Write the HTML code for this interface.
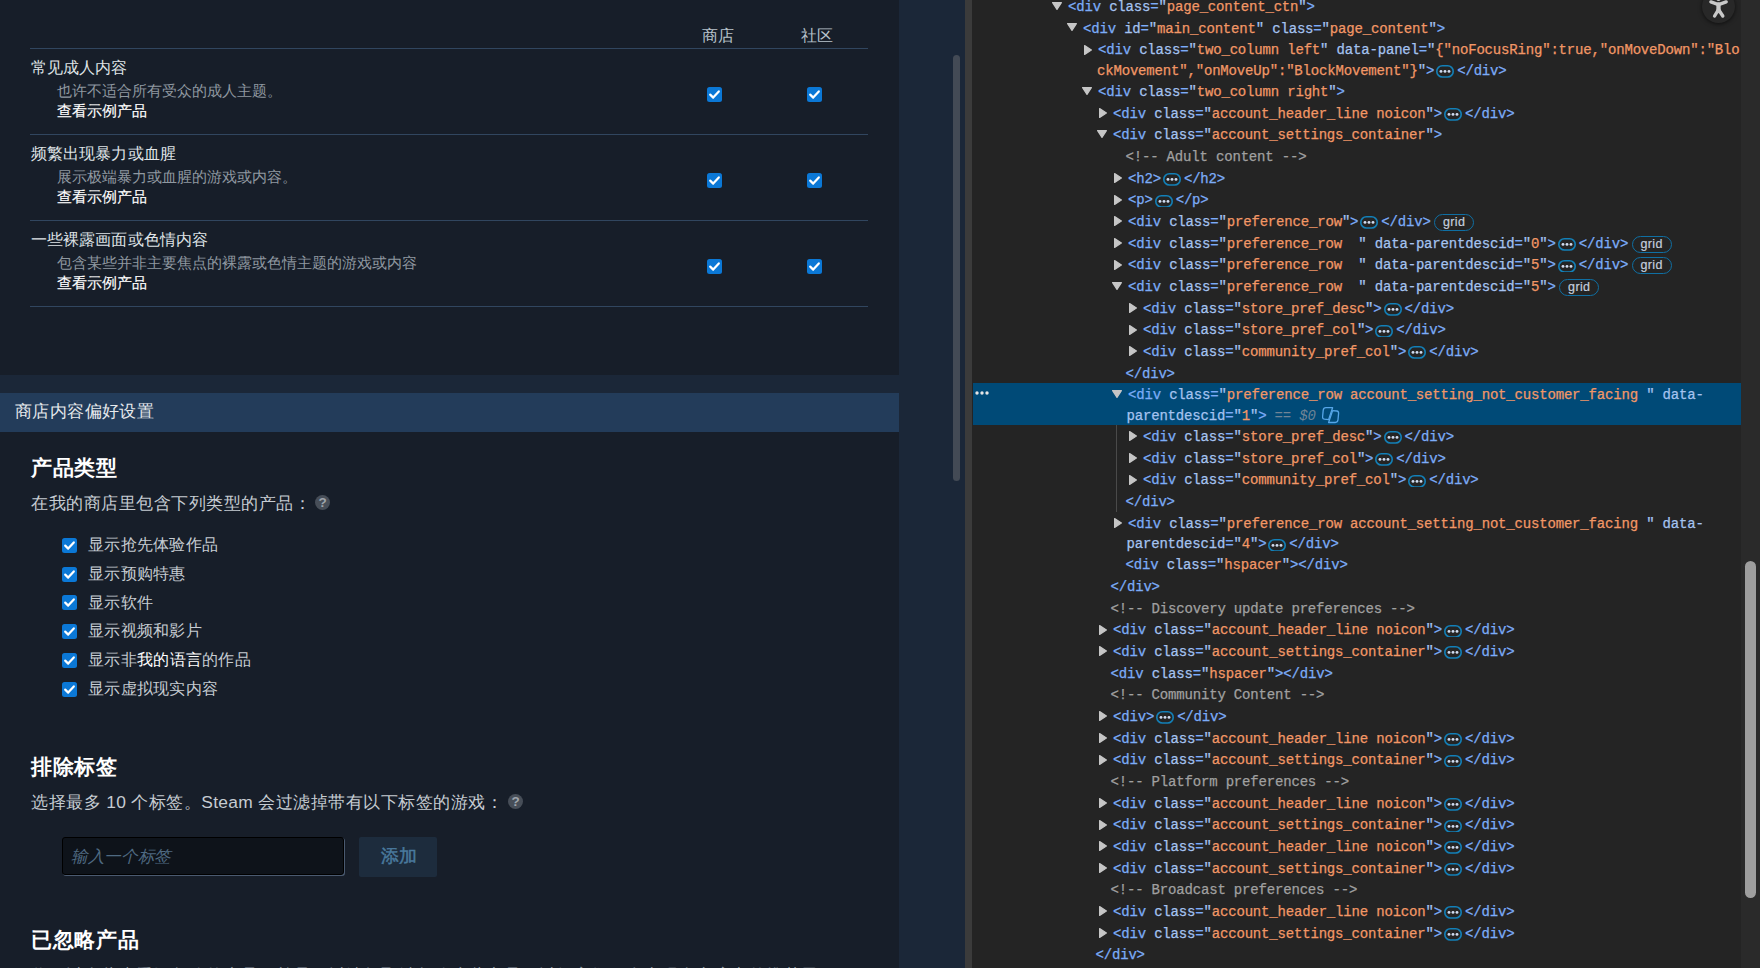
<!DOCTYPE html>
<html><head><meta charset="utf-8"><style>
*{margin:0;padding:0;box-sizing:border-box}
html,body{width:1760px;height:968px;overflow:hidden;background:#242424;font-family:"Liberation Sans",sans-serif}
#left{position:absolute;left:0;top:0;width:965px;height:968px;background:#1b2738;overflow:hidden}
.box{position:absolute;left:0;width:899px;background:#171e29}
.abs{position:absolute;white-space:nowrap}
.hdr{position:absolute;left:0;top:393px;width:899px;height:39px;background:#233c5a}
.rule{position:absolute;left:30px;width:838px;height:1px;background:#31465f}
.cb{position:absolute;width:15px;height:15px;border-radius:2.5px;background:#0b78d6}
.cb svg{position:absolute;left:0;top:0}
.col{color:#b8c3cc;font-size:16px}
.ttl{color:#dfe3e6;font-size:16px;letter-spacing:0.1px}
.dsc{color:#8f98a0;font-size:15px}
.lnk{color:#ffffff;font-size:15px;-webkit-text-stroke:0.15px #fff}
.h2{color:#ffffff;font-size:21px;font-weight:bold;letter-spacing:0.67px}
.txt{color:#c6ccd2;font-size:17.4px;letter-spacing:0.5px}
.lbl{color:#c6ccd2;font-size:16px;letter-spacing:0.3px}
.help{position:absolute;width:15px;height:15px;border-radius:50%;background:#474e58;color:#9ea5ac;font-size:13.5px;font-weight:bold;text-align:center;line-height:16.5px}
.inp{position:absolute;left:62px;top:837px;width:282px;height:38px;background:#0e131a;border:1px solid #000;border-radius:3px;box-shadow:1px 1px 0 #4a5a70}
.btn{position:absolute;left:359px;top:837px;width:78px;height:40px;background:#1d2c3d;border-radius:2px}
.thumbL{position:absolute;left:953px;top:55px;width:7px;height:426px;border-radius:4px;background:#434a55}
#divider{position:absolute;left:965px;top:0;width:7px;height:968px;background:#3b3b3b}
#dev{position:absolute;left:972px;top:0;width:788px;height:968px;background:#242424;overflow:hidden}
#dev .ln,#dev .tri,#dev .selbar,#dev .guide,#dev .dots3,#dev .a11y,#dev .vtrack,#dev .vthumb{position:absolute}
#dev .ln{margin-left:-972px;font-family:"Liberation Mono",monospace;font-size:14px;letter-spacing:-0.178px;line-height:21.56px;height:21.56px;white-space:pre;color:#a5c3f0;-webkit-text-stroke-width:0.25px}
.tg{color:#7cacf8}.at{color:#a5c3f0}.vl{color:#f29766}.cm{color:#a0a0a0}
.ell{display:inline-block;vertical-align:-3px;margin:0 3px 0 2px}
.grid{display:inline-block;position:relative;width:40px;height:17px;border:1.5px solid #0f6fa3;border-radius:9px;margin-left:3.5px;vertical-align:0px;font-family:"Liberation Sans",sans-serif;font-size:12.5px;letter-spacing:0.4px;line-height:14px;text-align:center;color:#c4cede;-webkit-text-stroke:0.2px #c4cede}
#dev .tri{margin-left:-972px}
.tr{border-left:8px solid #bdbdbd;border-top:5px solid transparent;border-bottom:5px solid transparent}
.td{border-top:8px solid #bdbdbd;border-left:5px solid transparent;border-right:5px solid transparent}
#dev .selbar{left:1px;width:768px;background:#004a77}
#dev .guide{left:144px;width:1px;background:#4a4a4a}
.eq{color:#6f8496;-webkit-text-stroke-width:0}.eq i{font-style:italic}
.ai{display:inline-block;vertical-align:-4px;margin-left:6px}
#dev .vtrack{left:769px;top:0;width:19px;height:968px;background:#2a2a2a}
#dev .vthumb{left:773px;top:561px;width:11px;height:337px;border-radius:6px;background:#9e9e9e}
#dev .a11y{left:730px;top:-10px;width:33px;height:33px;border-radius:50%;background:#282828;box-shadow:0 1px 4px rgba(0,0,0,0.6)}
#dev .a11y svg{position:absolute;left:0;top:0}

</style></head><body>
<div id="left">
<div class="box" style="top:0;height:375px"></div>
<div class="box" style="top:432px;height:536px"></div>
<div class="abs col" style="left:702px;top:26px">商店</div>
<div class="abs col" style="left:801px;top:26px">社区</div>
<div class="rule" style="top:48px"></div>
<div class="rule" style="top:134px"></div>
<div class="rule" style="top:220px"></div>
<div class="rule" style="top:306px"></div>

<div class="abs ttl" style="left:31px;top:58px">常见成人内容</div>
<div class="abs dsc" style="left:57px;top:82px">也许不适合所有受众的成人主题。</div>
<div class="abs lnk" style="left:57px;top:102px">查看示例产品</div>
<div class="abs ttl" style="left:31px;top:144px">频繁出现暴力或血腥</div>
<div class="abs dsc" style="left:57px;top:168px">展示极端暴力或血腥的游戏或内容。</div>
<div class="abs lnk" style="left:57px;top:188px">查看示例产品</div>
<div class="abs ttl" style="left:31px;top:230px">一些裸露画面或色情内容</div>
<div class="abs dsc" style="left:57px;top:254px">包含某些并非主要焦点的裸露或色情主题的游戏或内容</div>
<div class="abs lnk" style="left:57px;top:274px">查看示例产品</div>

<div class="cb" style="left:707px;top:87px"><svg width="15" height="15" viewBox="0 0 15 15"><path d="M3.2 7.6 L6.2 10.6 L11.8 4.4" fill="none" stroke="#fff" stroke-width="2.2" stroke-linecap="round" stroke-linejoin="round"/></svg></div>
<div class="cb" style="left:807px;top:87px"><svg width="15" height="15" viewBox="0 0 15 15"><path d="M3.2 7.6 L6.2 10.6 L11.8 4.4" fill="none" stroke="#fff" stroke-width="2.2" stroke-linecap="round" stroke-linejoin="round"/></svg></div>
<div class="cb" style="left:707px;top:173px"><svg width="15" height="15" viewBox="0 0 15 15"><path d="M3.2 7.6 L6.2 10.6 L11.8 4.4" fill="none" stroke="#fff" stroke-width="2.2" stroke-linecap="round" stroke-linejoin="round"/></svg></div>
<div class="cb" style="left:807px;top:173px"><svg width="15" height="15" viewBox="0 0 15 15"><path d="M3.2 7.6 L6.2 10.6 L11.8 4.4" fill="none" stroke="#fff" stroke-width="2.2" stroke-linecap="round" stroke-linejoin="round"/></svg></div>
<div class="cb" style="left:707px;top:259px"><svg width="15" height="15" viewBox="0 0 15 15"><path d="M3.2 7.6 L6.2 10.6 L11.8 4.4" fill="none" stroke="#fff" stroke-width="2.2" stroke-linecap="round" stroke-linejoin="round"/></svg></div>
<div class="cb" style="left:807px;top:259px"><svg width="15" height="15" viewBox="0 0 15 15"><path d="M3.2 7.6 L6.2 10.6 L11.8 4.4" fill="none" stroke="#fff" stroke-width="2.2" stroke-linecap="round" stroke-linejoin="round"/></svg></div>

<div class="hdr"></div>
<div class="abs txt" style="left:15px;top:399px;color:#e6e9ec;letter-spacing:0.4px">商店内容偏好设置</div>
<div class="abs h2" style="left:31px;top:454px">产品类型</div>
<div class="abs txt" style="left:31px;top:491px">在我的商店里包含下列类型的产品：</div>
<div class="help" style="left:315px;top:495px">?</div>

<div class="cb" style="left:62px;top:538px"><svg width="15" height="15" viewBox="0 0 15 15"><path d="M3.2 7.6 L6.2 10.6 L11.8 4.4" fill="none" stroke="#fff" stroke-width="2.2" stroke-linecap="round" stroke-linejoin="round"/></svg></div>
<div class="cb" style="left:62px;top:567px"><svg width="15" height="15" viewBox="0 0 15 15"><path d="M3.2 7.6 L6.2 10.6 L11.8 4.4" fill="none" stroke="#fff" stroke-width="2.2" stroke-linecap="round" stroke-linejoin="round"/></svg></div>
<div class="cb" style="left:62px;top:595px"><svg width="15" height="15" viewBox="0 0 15 15"><path d="M3.2 7.6 L6.2 10.6 L11.8 4.4" fill="none" stroke="#fff" stroke-width="2.2" stroke-linecap="round" stroke-linejoin="round"/></svg></div>
<div class="cb" style="left:62px;top:624px"><svg width="15" height="15" viewBox="0 0 15 15"><path d="M3.2 7.6 L6.2 10.6 L11.8 4.4" fill="none" stroke="#fff" stroke-width="2.2" stroke-linecap="round" stroke-linejoin="round"/></svg></div>
<div class="cb" style="left:62px;top:653px"><svg width="15" height="15" viewBox="0 0 15 15"><path d="M3.2 7.6 L6.2 10.6 L11.8 4.4" fill="none" stroke="#fff" stroke-width="2.2" stroke-linecap="round" stroke-linejoin="round"/></svg></div>
<div class="cb" style="left:62px;top:682px"><svg width="15" height="15" viewBox="0 0 15 15"><path d="M3.2 7.6 L6.2 10.6 L11.8 4.4" fill="none" stroke="#fff" stroke-width="2.2" stroke-linecap="round" stroke-linejoin="round"/></svg></div>

<div class="abs lbl" style="left:88px;top:534.5px">显示抢先体验作品</div>
<div class="abs lbl" style="left:88px;top:563.5px">显示预购特惠</div>
<div class="abs lbl" style="left:88px;top:592.5px">显示软件</div>
<div class="abs lbl" style="left:88px;top:620.5px">显示视频和影片</div>
<div class="abs lbl" style="left:88px;top:649.5px">显示非<span style="color:#fff">我的语言</span>的作品</div>
<div class="abs lbl" style="left:88px;top:678.5px">显示虚拟现实内容</div>

<div class="abs h2" style="left:31px;top:753px">排除标签</div>
<div class="abs txt" style="left:31px;top:790px">选择最多<span style="letter-spacing:0.33px"> 10 </span>个标签。<span style="letter-spacing:0.3px">Steam </span>会过滤掉带有以下标签的游戏：</div>
<div class="help" style="left:508px;top:794px">?</div>
<div class="inp"></div>
<div class="abs" style="left:71px;top:846px;font-size:16.5px;letter-spacing:-0.33px;font-style:italic;color:#4f6a82">输入一个标签</div>
<div class="btn"></div>
<div class="abs" style="left:380.5px;top:844px;font-size:18px;letter-spacing:0.3px;color:#4a7a9e;-webkit-text-stroke:0.45px #4a7a9e">添加</div>
<div class="abs h2" style="left:31px;top:926px">已忽略产品</div>
<div class="abs txt" style="left:31px;top:963px;color:#8f98a0">你可以在此查看已忽略的产品，并且可以选择取消忽略这些产品，以便它们再次出现在商店中的推荐里。</div>
<div class="thumbL"></div>
</div>
<div id="divider"></div>

<div id="dev">
<div class="selbar" style="top:382.91px;height:42.12px"></div>
<div class="guide" style="top:425.03px;height:86.64px"></div>
<svg class="dots3" width="20" height="8" viewBox="0 0 20 8" style="left:0px;top:389.41px"><g fill="#e6e6e6"><circle cx="5" cy="4" r="1.7"/><circle cx="10" cy="4" r="1.7"/><circle cx="15" cy="4" r="1.7"/></g></svg>
<svg class="tri" width="12" height="10" viewBox="0 0 12 10" style="left:1050.80px;top:0.79px"><path d="M1.6 1.6 L10.4 1.6 L6 8.4 Z" fill="#c6c6c6" stroke="#c6c6c6" stroke-width="1.2" stroke-linejoin="round"/></svg>
<div class="ln" style="left:1068px;top:-2.96px"><span class="tg">&lt;div</span> <span class="at">class</span><span class="tg">=</span><span class="at">"</span><span class="vl">page_content_ctn</span><span class="at">"</span><span class="tg">&gt;</span></div>
<svg class="tri" width="12" height="10" viewBox="0 0 12 10" style="left:1065.80px;top:22.45px"><path d="M1.6 1.6 L10.4 1.6 L6 8.4 Z" fill="#c6c6c6" stroke="#c6c6c6" stroke-width="1.2" stroke-linejoin="round"/></svg>
<div class="ln" style="left:1083px;top:18.70px"><span class="tg">&lt;div</span> <span class="at">id</span><span class="tg">=</span><span class="at">"</span><span class="vl">main_content</span><span class="at">"</span> <span class="at">class</span><span class="tg">=</span><span class="at">"</span><span class="vl">page_content</span><span class="at">"</span><span class="tg">&gt;</span></div>
<svg class="tri" width="10" height="12" viewBox="0 0 10 12" style="left:1082.70px;top:43.70px"><path d="M1.6 1.6 L8.4 6 L1.6 10.4 Z" fill="#c6c6c6" stroke="#c6c6c6" stroke-width="1.2" stroke-linejoin="round"/></svg>
<div class="ln" style="left:1098px;top:40.36px"><span class="tg">&lt;div</span> <span class="at">class</span><span class="tg">=</span><span class="at">"</span><span class="vl">two_column left</span><span class="at">"</span> <span class="at">data-panel</span><span class="tg">=</span><span class="at">"</span><span class="vl">{"noFocusRing":true,"onMoveDown":"Blo</span></div>
<div class="ln" style="left:1097px;top:60.98px"><span class="vl">ckMovement","onMoveUp":"BlockMovement"}</span><span class="at">"</span><span class="tg">&gt;</span><svg class="ell" width="18" height="12.8" viewBox="0 0 18 12.8"><rect x="0.8" y="0.8" width="16.4" height="11.2" rx="5.6" fill="none" stroke="#1380b8" stroke-width="1.6"/><g fill="#d0dcf0"><circle cx="5" cy="6.4" r="1.45"/><circle cx="9" cy="6.4" r="1.45"/><circle cx="13" cy="6.4" r="1.45"/></g></svg><span class="tg">&lt;/div&gt;</span></div>
<svg class="tri" width="12" height="10" viewBox="0 0 12 10" style="left:1080.80px;top:85.83px"><path d="M1.6 1.6 L10.4 1.6 L6 8.4 Z" fill="#c6c6c6" stroke="#c6c6c6" stroke-width="1.2" stroke-linejoin="round"/></svg>
<div class="ln" style="left:1098px;top:82.08px"><span class="tg">&lt;div</span> <span class="at">class</span><span class="tg">=</span><span class="at">"</span><span class="vl">two_column right</span><span class="at">"</span><span class="tg">&gt;</span></div>
<svg class="tri" width="10" height="12" viewBox="0 0 10 12" style="left:1097.70px;top:107.08px"><path d="M1.6 1.6 L8.4 6 L1.6 10.4 Z" fill="#c6c6c6" stroke="#c6c6c6" stroke-width="1.2" stroke-linejoin="round"/></svg>
<div class="ln" style="left:1113px;top:103.73px"><span class="tg">&lt;div</span> <span class="at">class</span><span class="tg">=</span><span class="at">"</span><span class="vl">account_header_line noicon</span><span class="at">"</span><span class="tg">&gt;</span><svg class="ell" width="18" height="12.8" viewBox="0 0 18 12.8"><rect x="0.8" y="0.8" width="16.4" height="11.2" rx="5.6" fill="none" stroke="#1380b8" stroke-width="1.6"/><g fill="#d0dcf0"><circle cx="5" cy="6.4" r="1.45"/><circle cx="9" cy="6.4" r="1.45"/><circle cx="13" cy="6.4" r="1.45"/></g></svg><span class="tg">&lt;/div&gt;</span></div>
<svg class="tri" width="12" height="10" viewBox="0 0 12 10" style="left:1095.80px;top:129.14px"><path d="M1.6 1.6 L10.4 1.6 L6 8.4 Z" fill="#c6c6c6" stroke="#c6c6c6" stroke-width="1.2" stroke-linejoin="round"/></svg>
<div class="ln" style="left:1113px;top:125.39px"><span class="tg">&lt;div</span> <span class="at">class</span><span class="tg">=</span><span class="at">"</span><span class="vl">account_settings_container</span><span class="at">"</span><span class="tg">&gt;</span></div>
<div class="ln" style="left:1125.5px;top:147.05px"><span class="cm">&lt;!-- Adult content --&gt;</span></div>
<svg class="tri" width="10" height="12" viewBox="0 0 10 12" style="left:1112.70px;top:172.06px"><path d="M1.6 1.6 L8.4 6 L1.6 10.4 Z" fill="#c6c6c6" stroke="#c6c6c6" stroke-width="1.2" stroke-linejoin="round"/></svg>
<div class="ln" style="left:1128px;top:168.71px"><span class="tg">&lt;h2&gt;</span><svg class="ell" width="18" height="12.8" viewBox="0 0 18 12.8"><rect x="0.8" y="0.8" width="16.4" height="11.2" rx="5.6" fill="none" stroke="#1380b8" stroke-width="1.6"/><g fill="#d0dcf0"><circle cx="5" cy="6.4" r="1.45"/><circle cx="9" cy="6.4" r="1.45"/><circle cx="13" cy="6.4" r="1.45"/></g></svg><span class="tg">&lt;/h2&gt;</span></div>
<svg class="tri" width="10" height="12" viewBox="0 0 10 12" style="left:1112.70px;top:193.72px"><path d="M1.6 1.6 L8.4 6 L1.6 10.4 Z" fill="#c6c6c6" stroke="#c6c6c6" stroke-width="1.2" stroke-linejoin="round"/></svg>
<div class="ln" style="left:1128px;top:190.37px"><span class="tg">&lt;p&gt;</span><svg class="ell" width="18" height="12.8" viewBox="0 0 18 12.8"><rect x="0.8" y="0.8" width="16.4" height="11.2" rx="5.6" fill="none" stroke="#1380b8" stroke-width="1.6"/><g fill="#d0dcf0"><circle cx="5" cy="6.4" r="1.45"/><circle cx="9" cy="6.4" r="1.45"/><circle cx="13" cy="6.4" r="1.45"/></g></svg><span class="tg">&lt;/p&gt;</span></div>
<svg class="tri" width="10" height="12" viewBox="0 0 10 12" style="left:1112.70px;top:215.38px"><path d="M1.6 1.6 L8.4 6 L1.6 10.4 Z" fill="#c6c6c6" stroke="#c6c6c6" stroke-width="1.2" stroke-linejoin="round"/></svg>
<div class="ln" style="left:1128px;top:212.03px"><span class="tg">&lt;div</span> <span class="at">class</span><span class="tg">=</span><span class="at">"</span><span class="vl">preference_row</span><span class="at">"</span><span class="tg">&gt;</span><svg class="ell" width="18" height="12.8" viewBox="0 0 18 12.8"><rect x="0.8" y="0.8" width="16.4" height="11.2" rx="5.6" fill="none" stroke="#1380b8" stroke-width="1.6"/><g fill="#d0dcf0"><circle cx="5" cy="6.4" r="1.45"/><circle cx="9" cy="6.4" r="1.45"/><circle cx="13" cy="6.4" r="1.45"/></g></svg><span class="tg">&lt;/div&gt;</span><span class="grid">grid</span></div>
<svg class="tri" width="10" height="12" viewBox="0 0 10 12" style="left:1112.70px;top:237.04px"><path d="M1.6 1.6 L8.4 6 L1.6 10.4 Z" fill="#c6c6c6" stroke="#c6c6c6" stroke-width="1.2" stroke-linejoin="round"/></svg>
<div class="ln" style="left:1128px;top:233.69px"><span class="tg">&lt;div</span> <span class="at">class</span><span class="tg">=</span><span class="at">"</span><span class="vl">preference_row  </span><span class="at">"</span> <span class="at">data-parentdescid</span><span class="tg">=</span><span class="at">"</span><span class="vl">0</span><span class="at">"</span><span class="tg">&gt;</span><svg class="ell" width="18" height="12.8" viewBox="0 0 18 12.8"><rect x="0.8" y="0.8" width="16.4" height="11.2" rx="5.6" fill="none" stroke="#1380b8" stroke-width="1.6"/><g fill="#d0dcf0"><circle cx="5" cy="6.4" r="1.45"/><circle cx="9" cy="6.4" r="1.45"/><circle cx="13" cy="6.4" r="1.45"/></g></svg><span class="tg">&lt;/div&gt;</span><span class="grid">grid</span></div>
<svg class="tri" width="10" height="12" viewBox="0 0 10 12" style="left:1112.70px;top:258.70px"><path d="M1.6 1.6 L8.4 6 L1.6 10.4 Z" fill="#c6c6c6" stroke="#c6c6c6" stroke-width="1.2" stroke-linejoin="round"/></svg>
<div class="ln" style="left:1128px;top:255.35px"><span class="tg">&lt;div</span> <span class="at">class</span><span class="tg">=</span><span class="at">"</span><span class="vl">preference_row  </span><span class="at">"</span> <span class="at">data-parentdescid</span><span class="tg">=</span><span class="at">"</span><span class="vl">5</span><span class="at">"</span><span class="tg">&gt;</span><svg class="ell" width="18" height="12.8" viewBox="0 0 18 12.8"><rect x="0.8" y="0.8" width="16.4" height="11.2" rx="5.6" fill="none" stroke="#1380b8" stroke-width="1.6"/><g fill="#d0dcf0"><circle cx="5" cy="6.4" r="1.45"/><circle cx="9" cy="6.4" r="1.45"/><circle cx="13" cy="6.4" r="1.45"/></g></svg><span class="tg">&lt;/div&gt;</span><span class="grid">grid</span></div>
<svg class="tri" width="12" height="10" viewBox="0 0 12 10" style="left:1110.80px;top:280.76px"><path d="M1.6 1.6 L10.4 1.6 L6 8.4 Z" fill="#c6c6c6" stroke="#c6c6c6" stroke-width="1.2" stroke-linejoin="round"/></svg>
<div class="ln" style="left:1128px;top:277.01px"><span class="tg">&lt;div</span> <span class="at">class</span><span class="tg">=</span><span class="at">"</span><span class="vl">preference_row  </span><span class="at">"</span> <span class="at">data-parentdescid</span><span class="tg">=</span><span class="at">"</span><span class="vl">5</span><span class="at">"</span><span class="tg">&gt;</span><span class="grid">grid</span></div>
<svg class="tri" width="10" height="12" viewBox="0 0 10 12" style="left:1127.70px;top:302.03px"><path d="M1.6 1.6 L8.4 6 L1.6 10.4 Z" fill="#c6c6c6" stroke="#c6c6c6" stroke-width="1.2" stroke-linejoin="round"/></svg>
<div class="ln" style="left:1143px;top:298.68px"><span class="tg">&lt;div</span> <span class="at">class</span><span class="tg">=</span><span class="at">"</span><span class="vl">store_pref_desc</span><span class="at">"</span><span class="tg">&gt;</span><svg class="ell" width="18" height="12.8" viewBox="0 0 18 12.8"><rect x="0.8" y="0.8" width="16.4" height="11.2" rx="5.6" fill="none" stroke="#1380b8" stroke-width="1.6"/><g fill="#d0dcf0"><circle cx="5" cy="6.4" r="1.45"/><circle cx="9" cy="6.4" r="1.45"/><circle cx="13" cy="6.4" r="1.45"/></g></svg><span class="tg">&lt;/div&gt;</span></div>
<svg class="tri" width="10" height="12" viewBox="0 0 10 12" style="left:1127.70px;top:323.69px"><path d="M1.6 1.6 L8.4 6 L1.6 10.4 Z" fill="#c6c6c6" stroke="#c6c6c6" stroke-width="1.2" stroke-linejoin="round"/></svg>
<div class="ln" style="left:1143px;top:320.34px"><span class="tg">&lt;div</span> <span class="at">class</span><span class="tg">=</span><span class="at">"</span><span class="vl">store_pref_col</span><span class="at">"</span><span class="tg">&gt;</span><svg class="ell" width="18" height="12.8" viewBox="0 0 18 12.8"><rect x="0.8" y="0.8" width="16.4" height="11.2" rx="5.6" fill="none" stroke="#1380b8" stroke-width="1.6"/><g fill="#d0dcf0"><circle cx="5" cy="6.4" r="1.45"/><circle cx="9" cy="6.4" r="1.45"/><circle cx="13" cy="6.4" r="1.45"/></g></svg><span class="tg">&lt;/div&gt;</span></div>
<svg class="tri" width="10" height="12" viewBox="0 0 10 12" style="left:1127.70px;top:345.35px"><path d="M1.6 1.6 L8.4 6 L1.6 10.4 Z" fill="#c6c6c6" stroke="#c6c6c6" stroke-width="1.2" stroke-linejoin="round"/></svg>
<div class="ln" style="left:1143px;top:342.00px"><span class="tg">&lt;div</span> <span class="at">class</span><span class="tg">=</span><span class="at">"</span><span class="vl">community_pref_col</span><span class="at">"</span><span class="tg">&gt;</span><svg class="ell" width="18" height="12.8" viewBox="0 0 18 12.8"><rect x="0.8" y="0.8" width="16.4" height="11.2" rx="5.6" fill="none" stroke="#1380b8" stroke-width="1.6"/><g fill="#d0dcf0"><circle cx="5" cy="6.4" r="1.45"/><circle cx="9" cy="6.4" r="1.45"/><circle cx="13" cy="6.4" r="1.45"/></g></svg><span class="tg">&lt;/div&gt;</span></div>
<div class="ln" style="left:1125.5px;top:363.66px"><span class="tg">&lt;/div&gt;</span></div>
<svg class="tri" width="12" height="10" viewBox="0 0 12 10" style="left:1110.80px;top:389.07px"><path d="M1.6 1.6 L10.4 1.6 L6 8.4 Z" fill="#c6c6c6" stroke="#c6c6c6" stroke-width="1.2" stroke-linejoin="round"/></svg>
<div class="ln" style="left:1128px;top:385.32px"><span class="tg">&lt;div</span> <span class="at">class</span><span class="tg">=</span><span class="at">"</span><span class="vl">preference_row account_setting_not_customer_facing </span><span class="at">"</span> <span class="at">data-</span></div>
<div class="ln" style="left:1126.5px;top:405.94px"><span class="at">parentdescid</span><span class="tg">=</span><span class="at">"</span><span class="vl">1</span><span class="at">"</span><span class="tg">&gt;</span><span class="eq"> == <i>$0</i></span><svg class="ai" width="18" height="17" viewBox="0 0 18 17"><g fill="none" stroke="#56a6e8" stroke-width="1.3" stroke-linejoin="round"><path d="M3.9 0.7 L10.6 0.7 L6.6 12.6 L2.4 12.2 Q0.4 11.9 0.6 9.8 L1.2 3.4 Q1.5 0.7 3.9 0.7 Z"/><path d="M13.3 15.5 L6.6 15.5 L10.6 3.6 L14.8 4.0 Q16.8 4.3 16.6 6.4 L16.0 12.8 Q15.7 15.5 13.3 15.5 Z"/></g></svg></div>
<svg class="tri" width="10" height="12" viewBox="0 0 10 12" style="left:1127.70px;top:430.39px"><path d="M1.6 1.6 L8.4 6 L1.6 10.4 Z" fill="#c6c6c6" stroke="#c6c6c6" stroke-width="1.2" stroke-linejoin="round"/></svg>
<div class="ln" style="left:1143px;top:427.04px"><span class="tg">&lt;div</span> <span class="at">class</span><span class="tg">=</span><span class="at">"</span><span class="vl">store_pref_desc</span><span class="at">"</span><span class="tg">&gt;</span><svg class="ell" width="18" height="12.8" viewBox="0 0 18 12.8"><rect x="0.8" y="0.8" width="16.4" height="11.2" rx="5.6" fill="none" stroke="#1380b8" stroke-width="1.6"/><g fill="#d0dcf0"><circle cx="5" cy="6.4" r="1.45"/><circle cx="9" cy="6.4" r="1.45"/><circle cx="13" cy="6.4" r="1.45"/></g></svg><span class="tg">&lt;/div&gt;</span></div>
<svg class="tri" width="10" height="12" viewBox="0 0 10 12" style="left:1127.70px;top:452.05px"><path d="M1.6 1.6 L8.4 6 L1.6 10.4 Z" fill="#c6c6c6" stroke="#c6c6c6" stroke-width="1.2" stroke-linejoin="round"/></svg>
<div class="ln" style="left:1143px;top:448.70px"><span class="tg">&lt;div</span> <span class="at">class</span><span class="tg">=</span><span class="at">"</span><span class="vl">store_pref_col</span><span class="at">"</span><span class="tg">&gt;</span><svg class="ell" width="18" height="12.8" viewBox="0 0 18 12.8"><rect x="0.8" y="0.8" width="16.4" height="11.2" rx="5.6" fill="none" stroke="#1380b8" stroke-width="1.6"/><g fill="#d0dcf0"><circle cx="5" cy="6.4" r="1.45"/><circle cx="9" cy="6.4" r="1.45"/><circle cx="13" cy="6.4" r="1.45"/></g></svg><span class="tg">&lt;/div&gt;</span></div>
<svg class="tri" width="10" height="12" viewBox="0 0 10 12" style="left:1127.70px;top:473.71px"><path d="M1.6 1.6 L8.4 6 L1.6 10.4 Z" fill="#c6c6c6" stroke="#c6c6c6" stroke-width="1.2" stroke-linejoin="round"/></svg>
<div class="ln" style="left:1143px;top:470.36px"><span class="tg">&lt;div</span> <span class="at">class</span><span class="tg">=</span><span class="at">"</span><span class="vl">community_pref_col</span><span class="at">"</span><span class="tg">&gt;</span><svg class="ell" width="18" height="12.8" viewBox="0 0 18 12.8"><rect x="0.8" y="0.8" width="16.4" height="11.2" rx="5.6" fill="none" stroke="#1380b8" stroke-width="1.6"/><g fill="#d0dcf0"><circle cx="5" cy="6.4" r="1.45"/><circle cx="9" cy="6.4" r="1.45"/><circle cx="13" cy="6.4" r="1.45"/></g></svg><span class="tg">&lt;/div&gt;</span></div>
<div class="ln" style="left:1125.5px;top:492.02px"><span class="tg">&lt;/div&gt;</span></div>
<svg class="tri" width="10" height="12" viewBox="0 0 10 12" style="left:1112.70px;top:517.03px"><path d="M1.6 1.6 L8.4 6 L1.6 10.4 Z" fill="#c6c6c6" stroke="#c6c6c6" stroke-width="1.2" stroke-linejoin="round"/></svg>
<div class="ln" style="left:1128px;top:513.68px"><span class="tg">&lt;div</span> <span class="at">class</span><span class="tg">=</span><span class="at">"</span><span class="vl">preference_row account_setting_not_customer_facing </span><span class="at">"</span> <span class="at">data-</span></div>
<div class="ln" style="left:1126.5px;top:534.30px"><span class="at">parentdescid</span><span class="tg">=</span><span class="at">"</span><span class="vl">4</span><span class="at">"</span><span class="tg">&gt;</span><svg class="ell" width="18" height="12.8" viewBox="0 0 18 12.8"><rect x="0.8" y="0.8" width="16.4" height="11.2" rx="5.6" fill="none" stroke="#1380b8" stroke-width="1.6"/><g fill="#d0dcf0"><circle cx="5" cy="6.4" r="1.45"/><circle cx="9" cy="6.4" r="1.45"/><circle cx="13" cy="6.4" r="1.45"/></g></svg><span class="tg">&lt;/div&gt;</span></div>
<div class="ln" style="left:1125.5px;top:555.40px"><span class="tg">&lt;div</span> <span class="at">class</span><span class="tg">=</span><span class="at">"</span><span class="vl">hspacer</span><span class="at">"</span><span class="tg">&gt;</span><span class="tg">&lt;/div&gt;</span></div>
<div class="ln" style="left:1110.5px;top:577.06px"><span class="tg">&lt;/div&gt;</span></div>
<div class="ln" style="left:1110.5px;top:598.72px"><span class="cm">&lt;!-- Discovery update preferences --&gt;</span></div>
<svg class="tri" width="10" height="12" viewBox="0 0 10 12" style="left:1097.70px;top:623.73px"><path d="M1.6 1.6 L8.4 6 L1.6 10.4 Z" fill="#c6c6c6" stroke="#c6c6c6" stroke-width="1.2" stroke-linejoin="round"/></svg>
<div class="ln" style="left:1113px;top:620.38px"><span class="tg">&lt;div</span> <span class="at">class</span><span class="tg">=</span><span class="at">"</span><span class="vl">account_header_line noicon</span><span class="at">"</span><span class="tg">&gt;</span><svg class="ell" width="18" height="12.8" viewBox="0 0 18 12.8"><rect x="0.8" y="0.8" width="16.4" height="11.2" rx="5.6" fill="none" stroke="#1380b8" stroke-width="1.6"/><g fill="#d0dcf0"><circle cx="5" cy="6.4" r="1.45"/><circle cx="9" cy="6.4" r="1.45"/><circle cx="13" cy="6.4" r="1.45"/></g></svg><span class="tg">&lt;/div&gt;</span></div>
<svg class="tri" width="10" height="12" viewBox="0 0 10 12" style="left:1097.70px;top:645.39px"><path d="M1.6 1.6 L8.4 6 L1.6 10.4 Z" fill="#c6c6c6" stroke="#c6c6c6" stroke-width="1.2" stroke-linejoin="round"/></svg>
<div class="ln" style="left:1113px;top:642.04px"><span class="tg">&lt;div</span> <span class="at">class</span><span class="tg">=</span><span class="at">"</span><span class="vl">account_settings_container</span><span class="at">"</span><span class="tg">&gt;</span><svg class="ell" width="18" height="12.8" viewBox="0 0 18 12.8"><rect x="0.8" y="0.8" width="16.4" height="11.2" rx="5.6" fill="none" stroke="#1380b8" stroke-width="1.6"/><g fill="#d0dcf0"><circle cx="5" cy="6.4" r="1.45"/><circle cx="9" cy="6.4" r="1.45"/><circle cx="13" cy="6.4" r="1.45"/></g></svg><span class="tg">&lt;/div&gt;</span></div>
<div class="ln" style="left:1110.5px;top:663.70px"><span class="tg">&lt;div</span> <span class="at">class</span><span class="tg">=</span><span class="at">"</span><span class="vl">hspacer</span><span class="at">"</span><span class="tg">&gt;</span><span class="tg">&lt;/div&gt;</span></div>
<div class="ln" style="left:1110.5px;top:685.36px"><span class="cm">&lt;!-- Community Content --&gt;</span></div>
<svg class="tri" width="10" height="12" viewBox="0 0 10 12" style="left:1097.70px;top:710.37px"><path d="M1.6 1.6 L8.4 6 L1.6 10.4 Z" fill="#c6c6c6" stroke="#c6c6c6" stroke-width="1.2" stroke-linejoin="round"/></svg>
<div class="ln" style="left:1113px;top:707.02px"><span class="tg">&lt;div&gt;</span><svg class="ell" width="18" height="12.8" viewBox="0 0 18 12.8"><rect x="0.8" y="0.8" width="16.4" height="11.2" rx="5.6" fill="none" stroke="#1380b8" stroke-width="1.6"/><g fill="#d0dcf0"><circle cx="5" cy="6.4" r="1.45"/><circle cx="9" cy="6.4" r="1.45"/><circle cx="13" cy="6.4" r="1.45"/></g></svg><span class="tg">&lt;/div&gt;</span></div>
<svg class="tri" width="10" height="12" viewBox="0 0 10 12" style="left:1097.70px;top:732.02px"><path d="M1.6 1.6 L8.4 6 L1.6 10.4 Z" fill="#c6c6c6" stroke="#c6c6c6" stroke-width="1.2" stroke-linejoin="round"/></svg>
<div class="ln" style="left:1113px;top:728.68px"><span class="tg">&lt;div</span> <span class="at">class</span><span class="tg">=</span><span class="at">"</span><span class="vl">account_header_line noicon</span><span class="at">"</span><span class="tg">&gt;</span><svg class="ell" width="18" height="12.8" viewBox="0 0 18 12.8"><rect x="0.8" y="0.8" width="16.4" height="11.2" rx="5.6" fill="none" stroke="#1380b8" stroke-width="1.6"/><g fill="#d0dcf0"><circle cx="5" cy="6.4" r="1.45"/><circle cx="9" cy="6.4" r="1.45"/><circle cx="13" cy="6.4" r="1.45"/></g></svg><span class="tg">&lt;/div&gt;</span></div>
<svg class="tri" width="10" height="12" viewBox="0 0 10 12" style="left:1097.70px;top:753.68px"><path d="M1.6 1.6 L8.4 6 L1.6 10.4 Z" fill="#c6c6c6" stroke="#c6c6c6" stroke-width="1.2" stroke-linejoin="round"/></svg>
<div class="ln" style="left:1113px;top:750.34px"><span class="tg">&lt;div</span> <span class="at">class</span><span class="tg">=</span><span class="at">"</span><span class="vl">account_settings_container</span><span class="at">"</span><span class="tg">&gt;</span><svg class="ell" width="18" height="12.8" viewBox="0 0 18 12.8"><rect x="0.8" y="0.8" width="16.4" height="11.2" rx="5.6" fill="none" stroke="#1380b8" stroke-width="1.6"/><g fill="#d0dcf0"><circle cx="5" cy="6.4" r="1.45"/><circle cx="9" cy="6.4" r="1.45"/><circle cx="13" cy="6.4" r="1.45"/></g></svg><span class="tg">&lt;/div&gt;</span></div>
<div class="ln" style="left:1110.5px;top:772.00px"><span class="cm">&lt;!-- Platform preferences --&gt;</span></div>
<svg class="tri" width="10" height="12" viewBox="0 0 10 12" style="left:1097.70px;top:797.00px"><path d="M1.6 1.6 L8.4 6 L1.6 10.4 Z" fill="#c6c6c6" stroke="#c6c6c6" stroke-width="1.2" stroke-linejoin="round"/></svg>
<div class="ln" style="left:1113px;top:793.65px"><span class="tg">&lt;div</span> <span class="at">class</span><span class="tg">=</span><span class="at">"</span><span class="vl">account_header_line noicon</span><span class="at">"</span><span class="tg">&gt;</span><svg class="ell" width="18" height="12.8" viewBox="0 0 18 12.8"><rect x="0.8" y="0.8" width="16.4" height="11.2" rx="5.6" fill="none" stroke="#1380b8" stroke-width="1.6"/><g fill="#d0dcf0"><circle cx="5" cy="6.4" r="1.45"/><circle cx="9" cy="6.4" r="1.45"/><circle cx="13" cy="6.4" r="1.45"/></g></svg><span class="tg">&lt;/div&gt;</span></div>
<svg class="tri" width="10" height="12" viewBox="0 0 10 12" style="left:1097.70px;top:818.66px"><path d="M1.6 1.6 L8.4 6 L1.6 10.4 Z" fill="#c6c6c6" stroke="#c6c6c6" stroke-width="1.2" stroke-linejoin="round"/></svg>
<div class="ln" style="left:1113px;top:815.31px"><span class="tg">&lt;div</span> <span class="at">class</span><span class="tg">=</span><span class="at">"</span><span class="vl">account_settings_container</span><span class="at">"</span><span class="tg">&gt;</span><svg class="ell" width="18" height="12.8" viewBox="0 0 18 12.8"><rect x="0.8" y="0.8" width="16.4" height="11.2" rx="5.6" fill="none" stroke="#1380b8" stroke-width="1.6"/><g fill="#d0dcf0"><circle cx="5" cy="6.4" r="1.45"/><circle cx="9" cy="6.4" r="1.45"/><circle cx="13" cy="6.4" r="1.45"/></g></svg><span class="tg">&lt;/div&gt;</span></div>
<svg class="tri" width="10" height="12" viewBox="0 0 10 12" style="left:1097.70px;top:840.32px"><path d="M1.6 1.6 L8.4 6 L1.6 10.4 Z" fill="#c6c6c6" stroke="#c6c6c6" stroke-width="1.2" stroke-linejoin="round"/></svg>
<div class="ln" style="left:1113px;top:836.97px"><span class="tg">&lt;div</span> <span class="at">class</span><span class="tg">=</span><span class="at">"</span><span class="vl">account_header_line noicon</span><span class="at">"</span><span class="tg">&gt;</span><svg class="ell" width="18" height="12.8" viewBox="0 0 18 12.8"><rect x="0.8" y="0.8" width="16.4" height="11.2" rx="5.6" fill="none" stroke="#1380b8" stroke-width="1.6"/><g fill="#d0dcf0"><circle cx="5" cy="6.4" r="1.45"/><circle cx="9" cy="6.4" r="1.45"/><circle cx="13" cy="6.4" r="1.45"/></g></svg><span class="tg">&lt;/div&gt;</span></div>
<svg class="tri" width="10" height="12" viewBox="0 0 10 12" style="left:1097.70px;top:861.98px"><path d="M1.6 1.6 L8.4 6 L1.6 10.4 Z" fill="#c6c6c6" stroke="#c6c6c6" stroke-width="1.2" stroke-linejoin="round"/></svg>
<div class="ln" style="left:1113px;top:858.63px"><span class="tg">&lt;div</span> <span class="at">class</span><span class="tg">=</span><span class="at">"</span><span class="vl">account_settings_container</span><span class="at">"</span><span class="tg">&gt;</span><svg class="ell" width="18" height="12.8" viewBox="0 0 18 12.8"><rect x="0.8" y="0.8" width="16.4" height="11.2" rx="5.6" fill="none" stroke="#1380b8" stroke-width="1.6"/><g fill="#d0dcf0"><circle cx="5" cy="6.4" r="1.45"/><circle cx="9" cy="6.4" r="1.45"/><circle cx="13" cy="6.4" r="1.45"/></g></svg><span class="tg">&lt;/div&gt;</span></div>
<div class="ln" style="left:1110.5px;top:880.29px"><span class="cm">&lt;!-- Broadcast preferences --&gt;</span></div>
<svg class="tri" width="10" height="12" viewBox="0 0 10 12" style="left:1097.70px;top:905.30px"><path d="M1.6 1.6 L8.4 6 L1.6 10.4 Z" fill="#c6c6c6" stroke="#c6c6c6" stroke-width="1.2" stroke-linejoin="round"/></svg>
<div class="ln" style="left:1113px;top:901.95px"><span class="tg">&lt;div</span> <span class="at">class</span><span class="tg">=</span><span class="at">"</span><span class="vl">account_header_line noicon</span><span class="at">"</span><span class="tg">&gt;</span><svg class="ell" width="18" height="12.8" viewBox="0 0 18 12.8"><rect x="0.8" y="0.8" width="16.4" height="11.2" rx="5.6" fill="none" stroke="#1380b8" stroke-width="1.6"/><g fill="#d0dcf0"><circle cx="5" cy="6.4" r="1.45"/><circle cx="9" cy="6.4" r="1.45"/><circle cx="13" cy="6.4" r="1.45"/></g></svg><span class="tg">&lt;/div&gt;</span></div>
<svg class="tri" width="10" height="12" viewBox="0 0 10 12" style="left:1097.70px;top:926.96px"><path d="M1.6 1.6 L8.4 6 L1.6 10.4 Z" fill="#c6c6c6" stroke="#c6c6c6" stroke-width="1.2" stroke-linejoin="round"/></svg>
<div class="ln" style="left:1113px;top:923.61px"><span class="tg">&lt;div</span> <span class="at">class</span><span class="tg">=</span><span class="at">"</span><span class="vl">account_settings_container</span><span class="at">"</span><span class="tg">&gt;</span><svg class="ell" width="18" height="12.8" viewBox="0 0 18 12.8"><rect x="0.8" y="0.8" width="16.4" height="11.2" rx="5.6" fill="none" stroke="#1380b8" stroke-width="1.6"/><g fill="#d0dcf0"><circle cx="5" cy="6.4" r="1.45"/><circle cx="9" cy="6.4" r="1.45"/><circle cx="13" cy="6.4" r="1.45"/></g></svg><span class="tg">&lt;/div&gt;</span></div>
<div class="ln" style="left:1095.5px;top:945.27px"><span class="tg">&lt;/div&gt;</span></div>
<div class="a11y"><svg width="33" height="33" viewBox="0 0 33 33"><g fill="#c9c9c9" stroke="#c9c9c9" stroke-linecap="round" stroke-linejoin="round"><circle cx="16.5" cy="8.6" r="2.3" stroke="none"/><path d="M8.9 11.9 L16.5 14.6 L24.2 11.9" fill="none" stroke-width="3.3"/><path d="M16.5 14.5 V21" fill="none" stroke-width="4.3"/><path d="M12.6 26 L16.5 19.5 L20.8 26" fill="none" stroke-width="3.4"/></g></svg></div>
<div class="vtrack"></div><div class="vthumb"></div>
</div>
</body></html>
